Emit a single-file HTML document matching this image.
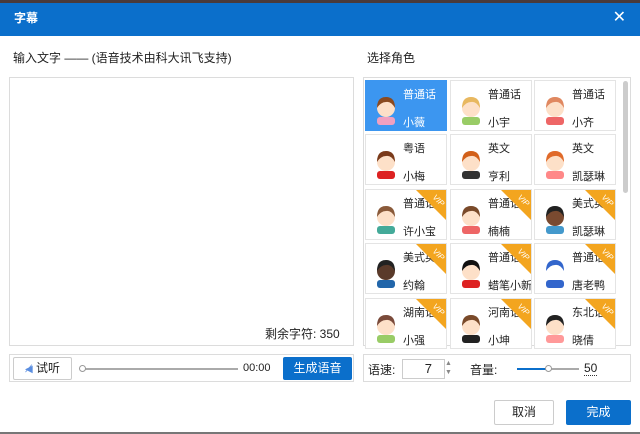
<!DOCTYPE html>
<html><head><meta charset="utf-8"><style>
*{margin:0;padding:0;box-sizing:border-box}
body{width:640px;height:434px;overflow:hidden;background:#fff;font-family:"Liberation Sans","Noto Sans CJK SC",sans-serif;font-size:12px;color:#222;position:relative}
.a{position:absolute}
.top{left:0;top:0;width:640px;height:3px;background:#4a3a3a}
.tb{left:0;top:3px;width:640px;height:33px;background:#0b6fcb;color:#fff;font-weight:bold;font-size:12px;line-height:31px;padding-left:14px}
.close{right:14px;top:10px;color:#fff;font-size:16px;line-height:16px}
.box{border:1px solid #dcdcdc}
.cell{position:absolute;width:82px;height:51px;border:1px solid #e4e4e4;background:#fff;overflow:hidden}
.cell.sel{background:#3c96f0;border-color:#3c96f0;color:#fff}
.cell .l1{position:absolute;left:37px;top:5px;font-size:11px;white-space:nowrap}
.cell .l2{position:absolute;left:37px;top:33px;font-size:11px;white-space:nowrap}
.cell svg{position:absolute;left:5px;top:12px}
.vip{position:absolute;right:0;top:0;width:30px;height:30px;background:#f3a51f;clip-path:polygon(0 0,100% 0,100% 100%)}
.vt{position:absolute;right:1px;top:6px;color:#fff;font-size:8px;transform:rotate(45deg);font-style:italic}
.btn{border:1px solid #ccc;background:#fff;text-align:center}
</style></head><body>
<div class="a top"></div>
<div class="a tb">字幕</div>
<div class="a close">✕</div>
<div class="a" style="left:13px;top:49px;font-size:12px">输入文字 —— (语音技术由科大讯飞支持)</div>
<div class="a" style="left:367px;top:49px;font-size:12px">选择角色</div>
<div class="a box" style="left:9px;top:77px;width:345px;height:269px"></div>
<div class="a" style="left:265px;top:325px;font-size:12px">剩余字符: 350</div>
<div class="a box" style="left:363px;top:77px;width:268px;height:269px"></div>
<div class="a" style="left:623px;top:81px;width:5px;height:112px;background:#ccc;border-radius:3px"></div>
<div id="g"></div>
<div class="a box" style="left:9px;top:354px;width:345px;height:28px"></div>
<div class="a btn" style="left:13px;top:357px;width:59px;height:23px;line-height:21px;border-radius:2px"><span style="color:#5b8ee0;font-size:10px">◀̸</span> 试听</div>
<div class="a" style="left:82px;top:368px;width:156px;height:2px;background:#aaa"></div>
<div class="a" style="left:79px;top:365px;width:7px;height:7px;border:1px solid #999;border-radius:50%;background:#fff"></div>
<div class="a" style="left:243px;top:362px;font-size:11px">00:00</div>
<div class="a" style="left:283px;top:357px;width:69px;height:23px;background:#0b6fcb;color:#fff;line-height:23px;text-align:center;border-radius:2px">生成语音</div>
<div class="a box" style="left:363px;top:354px;width:268px;height:28px"></div>
<div class="a" style="left:368px;top:361px">语速:</div>
<div class="a" style="left:402px;top:359px;width:43px;height:20px;border:1px solid #ccc;text-align:right;padding-right:12px;line-height:18px;font-size:13px">7</div>
<div class="a" style="left:443px;top:359px;width:11px;height:20px;font-size:7px;color:#888;line-height:9px;text-align:center">▲<br>▼</div>
<div class="a" style="left:470px;top:361px">音量:</div>
<div class="a" style="left:517px;top:368px;width:32px;height:2px;background:#0b6fcb"></div>
<div class="a" style="left:549px;top:368px;width:30px;height:2px;background:#aaa"></div>
<div class="a" style="left:545px;top:365px;width:7px;height:7px;border:1px solid #999;border-radius:50%;background:#fff"></div>
<div class="a" style="left:584px;top:361px;font-size:12px;border-bottom:1px dotted #333">50</div>
<div class="a btn" style="left:494px;top:400px;width:60px;height:25px;line-height:23px;border-radius:2px">取消</div>
<div class="a" style="left:566px;top:400px;width:65px;height:25px;line-height:25px;background:#0b6fcb;color:#fff;text-align:center;border-radius:2px">完成</div>
<div class="a" style="left:0;top:432px;width:640px;height:2px;background:#777"></div>
<script>
var d=[["普通话","小薇",0,"#8a4a20","#fde0c8","#f0a0c0"],["普通话","小宇",0,"#e8b860","#fde0c8","#9c6"],["普通话","小齐",0,"#e08860","#fde0c8","#e66"],
["粤语","小梅",0,"#7a3a1a","#fde0c8","#d22"],["英文","亨利",0,"#d2601a","#fde0c8","#333"],["英文","凯瑟琳",0,"#e06a2a","#fde0c8","#f88"],
["普通话","许小宝",1,"#8a5a3a","#fde0c8","#4a9"],["普通话","楠楠",1,"#7a4a2a","#fde0c8","#e66"],["美式英","凯瑟琳",1,"#222","#7a4a30","#49c"],
["美式英","约翰",1,"#222","#5a3a2a","#26a"],["普通话","蜡笔小新",1,"#111","#fde0c8","#d22"],["普通话","唐老鸭",1,"#36c","#fff","#36c"],
["湖南话","小强",1,"#7a4a3a","#fde0c8","#9c6"],["河南话","小坤",1,"#7a4a2a","#fde0c8","#222"],["东北话","晓倩",1,"#222","#fde0c8","#f99"]];
var h="",ys=[80,134,189,243,298],xs=[365,450,534];
d.forEach(function(c,i){var x=xs[i%3],y=ys[Math.floor(i/3)];
h+='<div class="cell'+(i==0?' sel':'')+'" style="left:'+x+'px;top:'+y+'px"><svg width="30" height="32"><rect x="6" y="24" width="18" height="8" rx="3" fill="'+c[5]+'"/><circle cx="15" cy="15" r="9" fill="'+c[4]+'"/><path d="M6 15 Q6 4 15 4 Q24 4 24 15 Q20 8 15 9 Q10 9 6 15Z" fill="'+c[3]+'"/></svg><div class="l1">'+c[0]+'</div><div class="l2">'+c[1]+'</div>'+(c[2]?'<div class="vip"></div><div class="vt">VIP</div>':'')+'</div>';});
document.getElementById('g').innerHTML=h;
</script>
</body></html>
